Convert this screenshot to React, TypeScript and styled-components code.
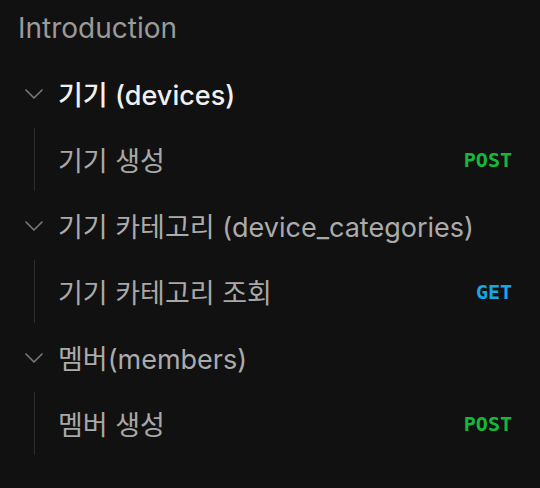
import React from 'react';
import styled, {createGlobalStyle} from "styled-components";

const GlobalStyle = createGlobalStyle`
  html, body {
    margin: 0;
    padding: 0;
    background: #111111;
  }
`

const Sidebar = styled.nav`
  width: 540px;
  height: 488px;
  box-sizing: border-box;
  padding: 10px 28px 0 18px;
  font-family: Inter, "Noto Sans CJK KR", sans-serif;
  background: #111111;
  overflow: hidden;
`
const Intro = styled.div`
  font-size: 28px;
  line-height: 36px;
  margin-bottom: 13px;
  color: #9a9a9a;
`
const Group = styled.div`
  display: flex;
  flex-direction: column;
`
const GroupHeader = styled.div<{ $active?: boolean }>`
  display: flex;
  align-items: center;
  height: 69px;
  gap: 15px;
  padding-left: 7px;
  font-size: 27px;
  color: ${props => (props.$active ? '#f0f0f0' : '#ababab')};
  font-weight: ${props => (props.$active ? 500 : 400)};
`
const Chevron = styled.svg`
  width: 18px;
  height: 10px;
  flex-shrink: 0;
`
const Children = styled.div`
  margin-left: 16px;
  border-left: 1px solid #2e2e2e;
`
const Item = styled.div`
  display: flex;
  align-items: center;
  justify-content: space-between;
  height: 63px;
  padding-left: 23px;
  font-size: 27px;
  color: #a8a8a8;
`
const methodColors: Record<string, string> = {
    POST: '#16b83a',
    GET: '#14a8e6',
}
const Method = styled.span<{ $method: string }>`
  font-family: "DejaVu Sans Mono", monospace;
  font-weight: bold;
  font-size: 20px;
  color: ${props => methodColors[props.$method]};
`

const groups = [
    {title: '기기 (devices)', active: true, items: [{name: '기기 생성', method: 'POST'}]},
    {title: '기기 카테고리 (device_categories)', items: [{name: '기기 카테고리 조회', method: 'GET'}]},
    {title: '멤버(members)', items: [{name: '멤버 생성', method: 'POST'}]},
]

const App: React.FC = () => {
    return (
        <>
            <GlobalStyle/>
            <Sidebar>
                <Intro>Introduction</Intro>
                {groups.map(group => (
                    <Group key={group.title}>
                        <GroupHeader $active={group.active}>
                            <Chevron viewBox="0 0 18 10" fill="none" stroke="#7a7a7a" strokeWidth={1.6}
                                     strokeLinecap="round" strokeLinejoin="round">
                                <path d="M1 1l8 8 8-8"/>
                            </Chevron>
                            {group.title}
                        </GroupHeader>
                        <Children>
                            {group.items.map(item => (
                                <Item key={item.name}>
                                    {item.name}
                                    <Method $method={item.method}>{item.method}</Method>
                                </Item>
                            ))}
                        </Children>
                    </Group>
                ))}
            </Sidebar>
        </>
    );
}

export default App;
